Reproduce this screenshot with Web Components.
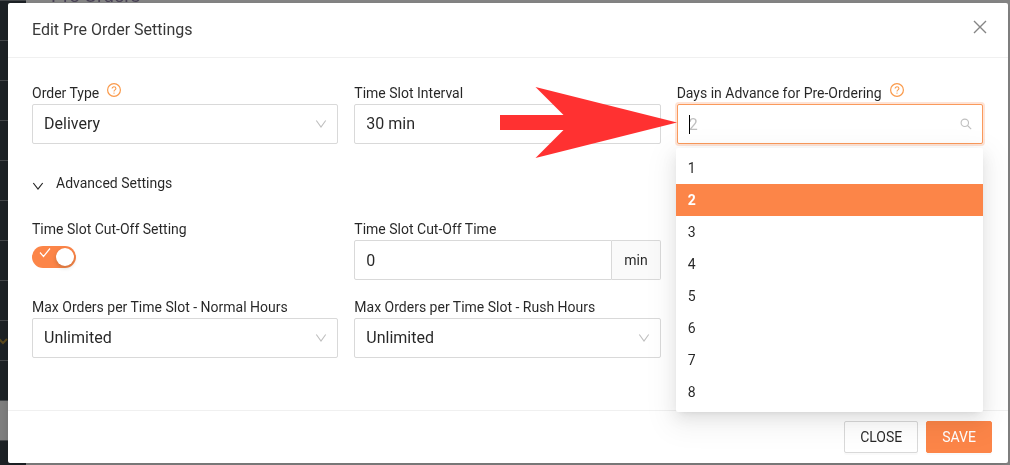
<!DOCTYPE html>
<html lang="en">
<head>
<meta charset="utf-8">
<title>Pre Orders</title>
<style>
  html, body { margin: 0; height: 100%; overflow: hidden; }
  body {
    --accent: #fc8548;
    --line: #d9d9d9;
    --ink: rgba(0, 0, 0, .85);
    font: 14px/22px Roboto, "Liberation Sans", sans-serif;
    color: var(--ink);
  }
</style>
</head>
<body>
<app-backdrop></app-backdrop>
<modal-dialog heading="Edit Pre Order Settings">
  <form-grid>
    <select-field label="Order Type" value="Delivery" help></select-field>
    <select-field label="Time Slot Interval" value="30 min"></select-field>
    <search-field label="Days in Advance for Pre-Ordering" value="2" options="1,2,3,4,5,6,7,8"></search-field>
  </form-grid>
  <settings-panel heading="Advanced Settings">
    <form-grid>
      <switch-field label="Time Slot Cut-Off Setting"></switch-field>
      <unit-field label="Time Slot Cut-Off Time" value="0" unit="min"></unit-field>
    </form-grid>
    <form-grid>
      <select-field label="Max Orders per Time Slot - Normal Hours" value="Unlimited"></select-field>
      <select-field label="Max Orders per Time Slot - Rush Hours" value="Unlimited"></select-field>
    </form-grid>
  </settings-panel>
  <action-button slot="footer">CLOSE</action-button>
  <action-button slot="footer" primary>SAVE</action-button>
</modal-dialog>

<script>
const HELP = `<svg class="help" width="14" height="14" viewBox="0 0 14 14" fill="none" stroke="#fa9a4b" aria-hidden="true"><circle cx="7" cy="7" r="6.4" stroke-width="1.2"/><path d="M5.1 5.6c0-1.1.8-1.8 1.9-1.8s1.9.7 1.9 1.7c0 1.4-1.9 1.3-1.9 2.9" stroke-width="1.1"/><circle cx="7" cy="10.1" r=".7" fill="#fa9a4b" stroke="none"/></svg>`;

const FIELD = `
  *, ::before { box-sizing: border-box; }
  :host { display: block; min-width: 0; margin-bottom: 16px; }
  label { display: flex; align-items: center; height: 22px; white-space: nowrap; }
  .help { margin: 0 0 6px 8px; }
  .control { position: relative; display: flex; align-items: center; }
  input, select {
    appearance: none; width: 100%; height: 40px; margin: 0; padding: 0 11px;
    border: 1px solid var(--line); border-radius: 2px; background: #fff;
    font: 16px/24px Roboto, "Liberation Sans", sans-serif; color: var(--ink); outline: none;
  }
`;

class Base extends HTMLElement {
  attr(name) { return this.getAttribute(name) || ''; }
  connectedCallback() {
    if (this.shadowRoot) return;
    this.attachShadow({ mode: 'open' }).innerHTML = this.render();
  }
}

customElements.define('app-backdrop', class extends Base {
  render() {
    return `<style>
      :host { position: fixed; inset: 0; display: flex; background: #868686; }
      nav { width: 26px; display: flex; flex-direction: column; background: #1d2226; }
      nav div { flex: none; height: 40px; box-sizing: border-box; border-bottom: 1px solid #45484b; display: flex; align-items: center; }
      nav div:first-child { height: 1px; }
      nav .active { background: #808080; }
      h1 { flex: 1; margin: -16px 0 0 25px; font-size: 19px; line-height: 24px; font-weight: 400; color: #4b4458; }
    </style>
    <nav>${'<div></div>'.repeat(9)}<div><svg width="8" height="8" viewBox="0 0 8 8" fill="none" stroke="#5c4a1e" stroke-width="2"><path d="M-1 2l4 4 4-4"/></svg></div><div></div><div class="active"></div><div></div></nav>
    <h1>Pre Orders</h1>`;
  }
});

customElements.define('modal-dialog', class extends Base {
  render() {
    return `<style>
      :host { position: relative; display: block; margin: 3px 2px 2px 8px; background: #fff; border-radius: 2px; box-shadow: 0 4px 12px rgba(0, 0, 0, .15); }
      header { display: flex; justify-content: space-between; align-items: center; padding: 16px 20px 16px 24px; border-bottom: 1px solid #f0f0f0; }
      h2 { margin: 0; font-size: 16px; line-height: 22px; font-weight: 400; color: #383838; }
      button { display: flex; padding: 0; border: 0; background: none; height: 16px; margin-bottom: 6px; }
      main { padding: 24px 25px 24px 24px; }
      footer { display: flex; justify-content: flex-end; gap: 8px; padding: 10px 16px; border-top: 1px solid #f0f0f0; }
    </style>
    <header><h2>${this.attr('heading')}</h2>
      <button type="button" aria-label="Close dialog"><svg width="16" height="16" viewBox="0 0 16 16" fill="none" stroke="#858585" stroke-width="1.4"><path d="M2 2l12 12M14 2L2 14"/></svg></button>
    </header>
    <main><slot></slot></main>
    <footer><slot name="footer"></slot></footer>`;
  }
});

customElements.define('form-grid', class extends Base {
  render() {
    return `<style>:host { display: grid; grid-template-columns: repeat(3, minmax(0, 1fr)); column-gap: 16px; }</style><slot></slot>`;
  }
});

customElements.define('select-field', class extends Base {
  render() {
    return `<style>${FIELD}
      .arrow { position: absolute; right: 11px; pointer-events: none; }
    </style>
    <label for="c">${this.attr('label')}${this.hasAttribute('help') ? HELP : ''}</label>
    <div class="control"><select id="c"><option>${this.attr('value')}</option></select>
      <svg class="arrow" width="12" height="12" viewBox="0 0 12 12" fill="none" stroke="#bfbfbf" stroke-width="1.1"><path d="M1.3 2.5L6 9l4.7-6.5"/></svg>
    </div>`;
  }
});

customElements.define('search-field', class extends Base {
  render() {
    const value = this.attr('value');
    return `<style>${FIELD}
      :host { position: relative; z-index: 1; }
      input { border-color: #fa9a5c; box-shadow: 0 0 0 2px rgba(252, 133, 72, .22); }
      input::placeholder { color: #bfbfbf; opacity: 1; }
      .caret { position: absolute; left: 12px; width: 1px; height: 19px; background: #000; }
      .glass { position: absolute; right: 11px; }
      .pointer { position: absolute; right: 100%; top: -17px; }
      ul { position: absolute; left: -1px; right: 0; top: 44px; margin: 0; padding: 4px 0; list-style: none; background: #fff; border-radius: 2px;
        box-shadow: 0 3px 6px -4px rgba(0,0,0,.12), 0 6px 16px 0 rgba(0,0,0,.08), 0 9px 28px 8px rgba(0,0,0,.05); }
      li { padding: 5px 12px; line-height: 22px; }
      li[aria-selected=true] { background: var(--accent); color: #fff; font-weight: 700; }
    </style>
    <label for="c">${this.attr('label')}${HELP}</label>
    <div class="control">
      <input id="c" type="text" role="combobox" aria-expanded="true" aria-controls="list" placeholder="${value}">
      <span class="caret"></span>
      <svg class="glass" width="12" height="12" viewBox="0 0 12 12" fill="none" stroke="#bfbfbf" stroke-width="1.1"><circle cx="4.8" cy="4.8" r="3.7"/><path d="M7.5 7.5l3.7 3.7"/></svg>
      <ul id="list" role="listbox">${this.attr('options').split(',').map(o => `<li role="option" aria-selected="${o === value}">${o}</li>`).join('')}</ul>
      <svg class="pointer" width="177" height="71" viewBox="0 0 177 71" fill="#ff3131" aria-hidden="true"><path d="M0 28H63.5L35.5 0 177 35.5 35.5 71 63.5 43H0z"/></svg>
    </div>`;
  }
});

customElements.define('unit-field', class extends Base {
  render() {
    return `<style>${FIELD}
      input { flex: 1; min-width: 0; border-radius: 2px 0 0 2px; }
      .unit { height: 40px; padding: 0 12px; border: 1px solid var(--line); border-left: 0; border-radius: 0 2px 2px 0; background: #fafafa; line-height: 38px; }
    </style>
    <label for="c">${this.attr('label')}</label>
    <div class="control"><input id="c" type="text" value="${this.attr('value')}"><span class="unit">${this.attr('unit')}</span></div>`;
  }
});

customElements.define('switch-field', class extends Base {
  render() {
    return `<style>${FIELD}
      .control { width: 44px; margin-top: 6px; }
      input { height: 22px; padding: 0; border: 0; border-radius: 11px; background: var(--accent); }
      input::before { content: ""; display: block; width: 18px; height: 18px; margin: 2px 2px 2px 24px; border-radius: 9px; background: #fff; box-shadow: 0 2px 4px rgba(0, 35, 11, .2); }
      svg { position: absolute; left: 7px; top: 1px; pointer-events: none; }
    </style>
    <label for="c">${this.attr('label')}</label>
    <div class="control"><input id="c" type="checkbox" role="switch" checked>
      <svg width="12" height="12" viewBox="0 0 12 12" fill="none" stroke="#fff" stroke-width="1.2"><path d="M1 5.5L4.5 9.5 11 1.5"/></svg>
    </div>`;
  }
});

customElements.define('settings-panel', class extends Base {
  render() {
    return `<style>
      :host { display: block; }
      button { display: flex; align-items: center; gap: 12px; width: 100%; padding: 12px 0; border: 0; background: none; font: inherit; color: inherit; text-align: left; }
      svg { margin-top: 6px; }
      section { padding: 12px 0; }
    </style>
    <button type="button" aria-expanded="true"><svg width="12" height="12" viewBox="0 0 12 12" fill="none" stroke="#262626" stroke-width="1.2"><path d="M1.3 3L6 9l4.7-6"/></svg>${this.attr('heading')}</button>
    <section><slot></slot></section>`;
  }
});

customElements.define('action-button', class extends Base {
  render() {
    const primary = this.hasAttribute('primary');
    return `<style>
      :host { display: block; }
      button { height: 32px; padding: 0 15px; border: 1px solid ${primary ? 'var(--accent)' : 'var(--line)'}; border-radius: 2px;
        background: ${primary ? 'var(--accent)' : '#fff'}; color: ${primary ? '#fff' : 'var(--ink)'}; font: inherit; box-shadow: 0 2px 0 rgba(0,0,0,.02); }
    </style><button type="button"><slot></slot></button>`;
  }
});
</script>
</body>
</html>
